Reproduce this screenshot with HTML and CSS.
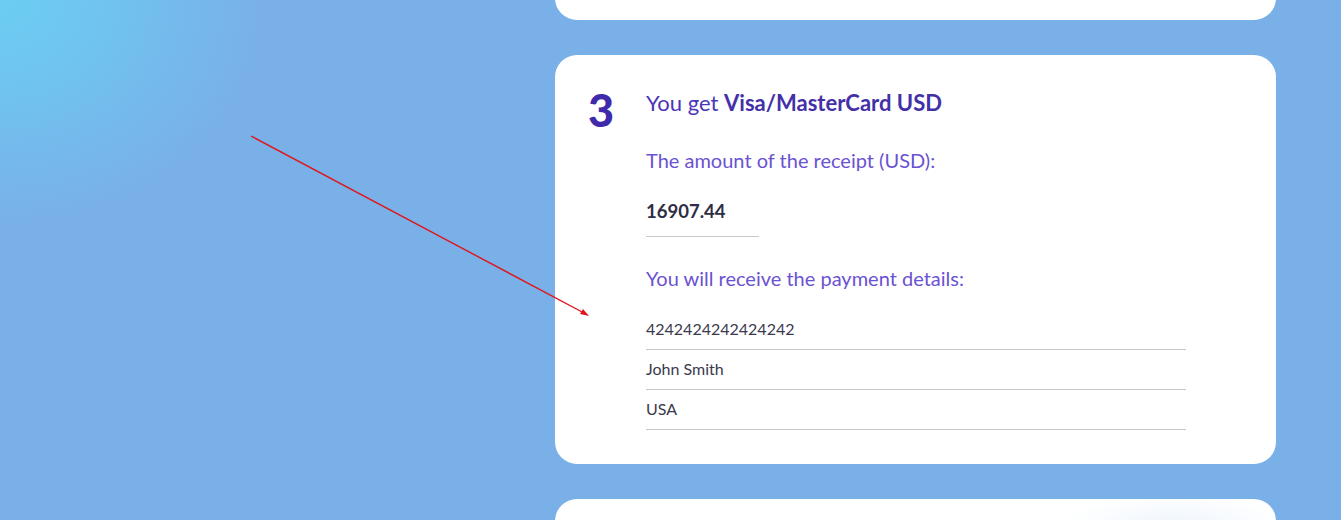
FILE: index.html
```html
<!DOCTYPE html>
<html lang="en">
<head>
<meta charset="utf-8">
<title>Exchange steps</title>
<link rel="stylesheet" href="styles.css">
</head>
<body>
<div class="page">
  <div class="aside"></div>
  <div class="steps">
    <section class="card card-prev"></section>
    <section class="card step">
      <div class="step-num">3</div>
      <div class="step-body">
        <h2 class="step-title">You get <b>Visa/MasterCard USD</b></h2>
        <p class="label">The amount of the receipt (USD):</p>
        <div class="amount">16907.44</div>
        <p class="label label-details">You will receive the payment details:</p>
        <ul class="details">
          <li>4242424242424242</li>
          <li>John Smith</li>
          <li>USA</li>
        </ul>
      </div>
    </section>
    <section class="card card-next"></section>
  </div>
</div>
<svg class="annotation" width="1341" height="520" viewBox="0 0 1341 520">
  <line x1="251" y1="136" x2="584" y2="313" stroke="#e0161b" stroke-width="1.4"/>
  <polygon points="589,316 580,314 583,309" fill="#e0161b"/>
</svg>
</body>
</html>
```

FILE: styles.css
```css
* { box-sizing: border-box; }
html, body { margin: 0; padding: 0; }
body {
  width: 1341px;
  height: 520px;
  overflow: hidden;
  font-family: Lato, "Open Sans", sans-serif;
  background:
    radial-gradient(ellipse 260px 220px at 0 0, #6ccdf2 0%, #6fc5f0 35%, rgba(120,176,232,0) 100%),
    #79b0e8;
  position: relative;
}
.page {
  display: flex;
  height: 100%;
}
.aside { width: 555px; flex: none; }
.steps {
  width: 721px;
  flex: none;
  display: flex;
  flex-direction: column;
  gap: 35px;
  margin-top: -80px;
}
.card {
  background: #fff;
  border-radius: 22px;
}
.card-prev { height: 100px; flex: none; }
.card-next {
  height: 100px;
  flex: none;
  background:
    radial-gradient(ellipse 110px 30px at 620px 25px, rgba(232,242,252,0.7), rgba(255,255,255,0) 100%),
    #fff;
}
.step {
  display: flex;
  padding: 34px 90px 34px 33px;
}
.step-num {
  width: 58px;
  flex: none;
  font-size: 45px;
  font-weight: 900;
  line-height: 1;
  color: #3f2aab;
  margin-top: -1px;
}
.step-body { flex: 1; }
.step-title {
  margin: 0;
  font-size: 22px;
  line-height: 28px;
  font-weight: 400;
  color: #4b36b6;
}
.step-title b { font-weight: 700; color: #4330a8; }
.label {
  margin: 30px 0 0;
  font-size: 20px;
  line-height: 26px;
  color: #6a52d2;
}
.amount {
  width: 113px;
  margin-top: 26px;
  padding-bottom: 13px;
  border-bottom: 1px solid #c9c9cf;
  font-size: 18.5px;
  line-height: 24px;
  font-weight: 700;
  color: #2e2d45;
}
.label-details { margin-top: 28px; }
.details {
  list-style: none;
  margin: 27px 0 0;
  padding: 0;
}
.details li {
  font-size: 16px;
  line-height: 22px;
  padding: 0 0 9px;
  margin-top: 8px;
  border-bottom: 1px solid #c5c5cc;
  color: #3a394e;
}
.details li:first-child { margin-top: 0; }
.annotation {
  position: absolute;
  left: 0;
  top: 0;
  pointer-events: none;
}
```
